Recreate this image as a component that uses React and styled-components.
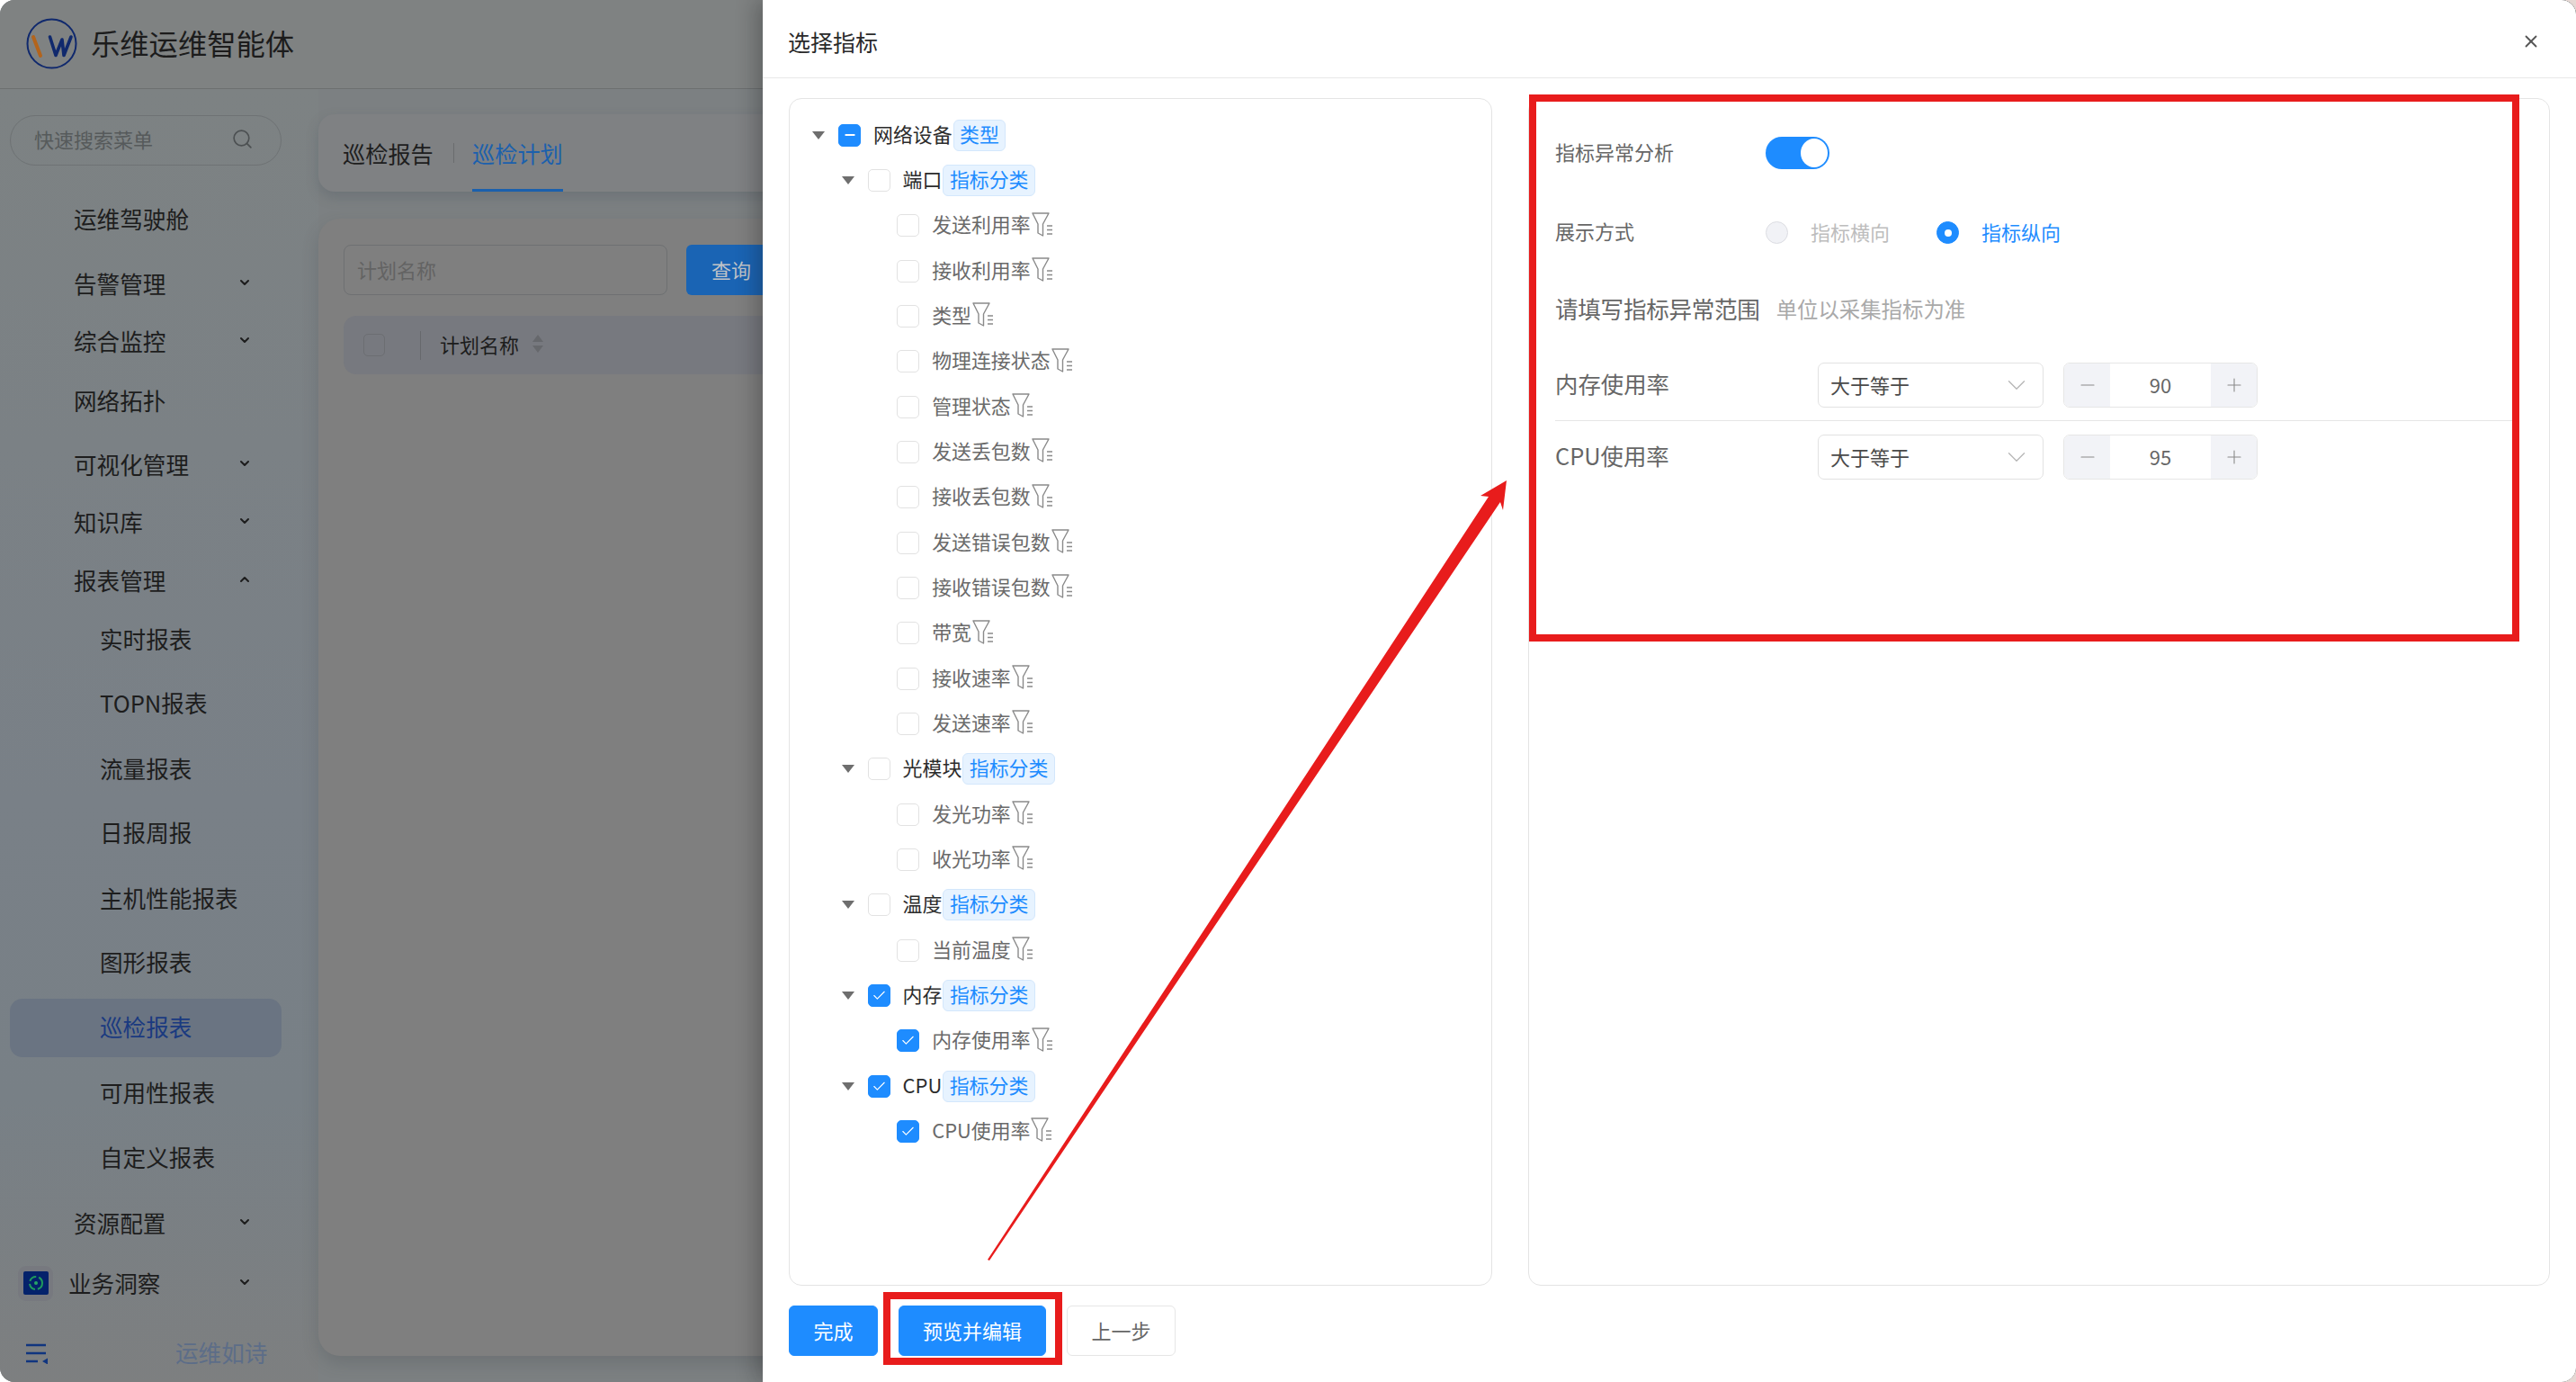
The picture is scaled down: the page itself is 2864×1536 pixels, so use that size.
import React from "react";
import styled, { createGlobalStyle } from "styled-components";
import { Search, X, ChevronDown, ChevronUp, Check, Minus, Plus } from "lucide-react";

const GlobalStyle = createGlobalStyle`
  html, body {
    margin: 0;
    padding: 0;
    background: linear-gradient(90deg, #fff 50%, #e6d8d4 50%);
  }
  * {
    box-sizing: border-box;
  }
  body {
    font-family: "Noto Sans CJK SC", "Noto Sans", sans-serif;
  }
`;

const Shell = styled.div`
  position: relative;
  width: 2864px;
  height: 1536px;
  border-radius: 16px;
  overflow: hidden;
  background: #7c8082;
  display: flex;
  flex-direction: column;
`;

const TopBar = styled.header`
  height: 99px;
  flex: none;
  display: flex;
  align-items: center;
  gap: 15px;
  padding: 0 0 2px 29px;
  background: #7f8282;
  border-bottom: 1px solid #6c6f70;
`;

const AppName = styled.div`
  font-size: 32.3px;
  margin-bottom: 2px;
  color: #1c1c1c;
  white-space: nowrap;
`;

const Body = styled.div`
  flex: 1;
  min-height: 0;
  display: flex;
`;

const Sidebar = styled.aside`
  width: 354px;
  flex: none;
  padding: 29px 41px 0 11px;
  display: flex;
  flex-direction: column;
  background: linear-gradient(180deg, #7d8283 0%, #798087 55%, #788086 78%, #7d7f80 100%);
`;

const SearchBox = styled.div`
  height: 56px;
  flex: none;
  border-radius: 28px;
  border: 1px solid #6e7274;
  padding: 0 30px 4px 26px;
  display: flex;
  align-items: center;
  justify-content: space-between;
  font-size: 22px;
  color: #565a5b;
  svg {
    color: #4c5052;
  }
`;

const Nav = styled.nav`
  padding-top: 28px;
  display: flex;
  flex-direction: column;
`;

const NavItem = styled.div`
  height: ${(p) => (p.$active ? 65 : 64)}px;
  margin-top: ${(p) => p.$gap}px;
  flex: none;
  display: flex;
  align-items: center;
  padding: 0 33px 0 ${(p) => (p.$tile ? 9 : p.$sub ? 100 : 71)}px;
  font-size: 25.6px;
  color: ${(p) => (p.$active ? "#1a3a80" : "#1d1d1d")};
  background: ${(p) => (p.$active ? "#6a7482" : "transparent")};
  border-radius: 14px;
  white-space: nowrap;
`;

const NavLabel = styled.span`
  flex: 1;
  margin-bottom: 4px;
`;

const NavArrow = styled.span`
  display: flex;
  margin-top: -5px;
  color: #1d1d1d;
`;

const IconTile = styled.span`
  width: 39px;
  height: 39px;
  flex: none;
  margin-right: 17px;
  margin-top: -2px;
  border-radius: 9px;
  background: #77797f;
  display: flex;
  align-items: center;
  justify-content: center;
`;

const SideFoot = styled.div`
  margin-top: auto;
  height: 44px;
  margin-bottom: 10px;
  padding-left: 18px;
  display: flex;
  align-items: center;
`;

const FootText = styled.span`
  margin-left: 141px;
  margin-bottom: 4px;
  font-size: 25.6px;
  color: #5c6d88;
  white-space: nowrap;
`;

const Main = styled.main`
  flex: 1;
  min-width: 0;
  padding: 28px 0 29px;
  display: flex;
  flex-direction: column;
  gap: 30px;
`;

const TabCard = styled.div`
  height: 86px;
  flex: none;
  padding: 0 0 0 27px;
  display: flex;
  align-items: center;
  background: #7f8183;
  border-radius: 18px 0 0 18px;
  box-shadow: 0 6px 14px rgba(70, 80, 90, 0.28);
`;

const Tab = styled.div`
  position: relative;
  height: 100%;
  display: flex;
  align-items: center;
  width: 101px;
  font-size: 25.2px;
  color: ${(p) => (p.$active ? "#1b60ad" : "#1d1d1d")};
  &::after {
    content: "";
    display: ${(p) => (p.$active ? "block" : "none")};
    position: absolute;
    left: 0;
    right: 0;
    bottom: 0;
    height: 3px;
    background: #1b60ad;
  }
`;

const TabSep = styled.span`
  width: 1px;
  height: 22px;
  margin: 0 20px 0 22px;
  background: #6a6c6e;
`;

const ContentCard = styled.div`
  flex: 1;
  padding: 29px 0 0 28px;
  background: #7f7f7f;
  border-radius: 24px 0 0 24px;
  box-shadow: 0 8px 18px rgba(60, 65, 70, 0.22);
`;

const FilterRow = styled.div`
  display: flex;
  gap: 21px;
`;

const FilterInput = styled.div`
  width: 360px;
  height: 56px;
  padding: 0 14px 2px;
  display: flex;
  align-items: center;
  border: 1px solid #6e7072;
  border-radius: 8px;
  font-size: 22px;
  color: #636363;
`;

const QueryButton = styled.div`
  flex: 1;
  height: 56px;
  padding: 0 0 3px 28px;
  display: flex;
  align-items: center;
  background: #1a64b4;
  border-radius: 6px 0 0 6px;
  font-size: 22px;
  color: #c0c3c8;
`;

const TableHead = styled.div`
  height: 65px;
  margin-top: 23px;
  padding-left: 22px;
  display: flex;
  align-items: center;
  background: #77797f;
  border-radius: 14px 0 0 14px;
  font-size: 22px;
  color: #1c1c1c;
`;

const HeadTitle = styled.span`
  margin-bottom: 4px;
`;

const HeadCheck = styled.span`
  width: 24px;
  height: 25px;
  border: 1px solid #6c6e72;
  border-radius: 5px;
`;

const HeadSep = styled.span`
  width: 1px;
  height: 32px;
  margin: 0 21px 0 39px;
  background: #66686c;
`;

const SortMark = styled.svg`
  width: 12px;
  height: 20px;
  margin: 0 0 4px 15px;
`;

const Drawer = styled.section`
  position: absolute;
  top: 0;
  bottom: 0;
  left: 848px;
  right: 0;
  display: flex;
  flex-direction: column;
  background: #fff;
  border-radius: 0 16px 16px 0;
  box-shadow: -8px 0 22px rgba(20, 20, 20, 0.28);
`;

const DrawerHead = styled.div`
  height: 87px;
  flex: none;
  padding: 5px 39px 0 28px;
  display: flex;
  align-items: center;
  justify-content: space-between;
  border-bottom: 1px solid #e8e8e8;
  font-size: 25px;
  color: #2a2a2a;
  svg {
    color: #555;
  }
`;

const DrawerBody = styled.div`
  flex: 1;
  min-height: 0;
  padding: 22px 29px 0;
  display: flex;
  gap: 40px;
`;

const Panel = styled.div`
  position: relative;
  width: ${(p) => p.$width}px;
  flex: none;
  border: 1px solid #e4e4e4;
  border-radius: 14px;
`;

const TreePanel = styled(Panel)`
  padding-top: 15px;
`;

const TreeRow = styled.div`
  height: 50.34px;
  padding-left: ${(p) => 25 + p.$level * 32.6}px;
  display: flex;
  align-items: center;
  font-size: 21.9px;
  white-space: nowrap;
  color: ${(p) => (p.$level === 2 ? "#6a6a6a" : "#2c2c2c")};
`;

const Caret = styled.span`
  width: 29px;
  flex: none;
  display: flex;
  &::before {
    content: "";
    display: ${(p) => (p.$show ? "block" : "none")};
    width: 0;
    height: 0;
    border-left: 7.5px solid transparent;
    border-right: 7.5px solid transparent;
    border-top: 9px solid #6e6e6e;
  }
`;

const TreeCheck = styled.span`
  width: 25px;
  height: 25px;
  flex: none;
  margin-right: 14px;
  display: flex;
  align-items: center;
  justify-content: center;
  color: #fff;
  border-radius: 5px;
  border: 1px solid ${(p) => (p.$state === "none" ? "#e2e2e2" : "#1e8cff")};
  background: ${(p) => (p.$state === "none" ? "#fff" : "#1e8cff")};
`;

const TreeLabel = styled.span`
  margin-bottom: 4px;
`;

const TagChip = styled.span`
  height: 35px;
  margin-left: 1px;
  padding: 0 6.5px 4px;
  display: flex;
  align-items: center;
  background: #e7f3ff;
  border: 1px solid #d3e7fc;
  border-radius: 6px;
  color: #1e8cff;
`;

const FunnelMark = styled.svg`
  width: 24px;
  height: 27px;
  flex: none;
  margin: -3px 0 0 1px;
`;

const FormPanel = styled(Panel)`
  padding: 42px 39px 0 29px;
`;

const OptionRow = styled.div`
  height: ${(p) => p.$height}px;
  margin-top: ${(p) => p.$gap || 0}px;
  display: flex;
  align-items: center;
  font-size: 22px;
  color: #666;
`;

const OptionLabel = styled.span`
  width: 234px;
  flex: none;
  margin-bottom: 5px;
`;

const Toggle = styled.span`
  width: 71px;
  height: 36px;
  padding: 2px;
  display: flex;
  justify-content: flex-end;
  background: #1e8cff;
  border-radius: 18px;
  &::after {
    content: "";
    width: 30px;
    height: 32px;
    border-radius: 50%;
    background: #fff;
  }
`;

const RadioDot = styled.span`
  width: 25px;
  height: 25px;
  flex: none;
  margin-right: 25px;
  display: flex;
  align-items: center;
  justify-content: center;
  border-radius: 50%;
  border: 1px solid ${(p) => (p.$on ? "#1e8cff" : "#dcdde2")};
  background: ${(p) => (p.$on ? "#1e8cff" : "#f1f2f6")};
  &::after {
    content: "";
    display: ${(p) => (p.$on ? "block" : "none")};
    width: 8px;
    height: 8px;
    border-radius: 50%;
    background: #fff;
  }
`;

const RadioText = styled.span`
  margin: 0 ${(p) => (p.$on ? 0 : 52)}px 3px 0;
  color: ${(p) => (p.$on ? "#1e8cff" : "#bdbdbd")};
`;

const RangeTitle = styled.span`
  font-size: 25.6px;
  color: #666;
  letter-spacing: -0.3px;
  margin-bottom: 2px;
`;

const RangeHint = styled.span`
  margin-left: 18px;
  font-size: 23.4px;
  color: #a9a9a9;
`;

const RangeList = styled.div`
  margin-top: 45px;
`;

const RangeRow = styled.div`
  padding-bottom: 14px;
  margin-bottom: 15px;
  display: flex;
  align-items: center;
  border-bottom: 1px solid ${(p) => (p.$last ? "transparent" : "#e6e6e6")};
`;

const RangeName = styled.span`
  width: 292px;
  flex: none;
  margin-bottom: 4px;
  font-size: 25.4px;
  color: #666;
`;

const SelectBox = styled.div`
  width: 251px;
  height: 50px;
  flex: none;
  padding: 0 12px 0 13px;
  display: flex;
  align-items: center;
  justify-content: space-between;
  border: 1px solid #e2e2e2;
  border-radius: 7px;
  font-size: 22px;
  color: #4a4a4a;
  svg {
    color: #b5b5b5;
  }
`;

const SelectText = styled.span`
  margin-bottom: 3px;
`;

const Stepper = styled.div`
  width: 216px;
  height: 50px;
  margin-left: 22px;
  flex: none;
  display: flex;
  align-items: stretch;
  border: 1px solid #e6e6e6;
  border-radius: 7px;
  overflow: hidden;
  font-size: 22px;
  color: #666;
`;

const StepButton = styled.span`
  width: 51px;
  flex: none;
  display: flex;
  align-items: center;
  justify-content: center;
  background: #f2f3f7;
  color: #8a8a8a;
`;

const StepValue = styled.span`
  flex: 1;
  padding-bottom: 3px;
  display: flex;
  align-items: center;
  justify-content: center;
`;

const DrawerFoot = styled.div`
  height: 107px;
  flex: none;
  padding: 22px 29px 0;
  display: flex;
  gap: 23px;
`;

const ActionButton = styled.div`
  position: relative;
  width: ${(p) => p.$width}px;
  height: 56px;
  padding-bottom: 3px;
  display: flex;
  align-items: center;
  justify-content: center;
  font-size: 22px;
  border-radius: 6px;
  color: ${(p) => (p.$primary ? "#fff" : "#666")};
  background: ${(p) => (p.$primary ? "#1e8cff" : "#fff")};
  border: 1px solid ${(p) => (p.$primary ? "#1e8cff" : "#e6e6e6")};
`;

const ButtonFrame = styled.span`
  position: absolute;
  top: -16px;
  bottom: -11px;
  left: -18px;
  right: -19px;
  border: 8px solid #e81c1c;
  pointer-events: none;
`;

const PanelFrame = styled.span`
  position: absolute;
  top: -5px;
  left: 0;
  width: 1101px;
  height: 608px;
  border: 8px solid #e81c1c;
  pointer-events: none;
`;

const ArrowLayer = styled.svg`
  position: absolute;
  top: 0;
  left: 0;
  width: 2864px;
  height: 1536px;
  pointer-events: none;
`;

const treeRows = [
  { level: 0, label: "网络设备", tag: "类型", state: "partial" },
  { level: 1, label: "端口", tag: "指标分类" },
  { level: 2, label: "发送利用率" },
  { level: 2, label: "接收利用率" },
  { level: 2, label: "类型" },
  { level: 2, label: "物理连接状态" },
  { level: 2, label: "管理状态" },
  { level: 2, label: "发送丢包数" },
  { level: 2, label: "接收丢包数" },
  { level: 2, label: "发送错误包数" },
  { level: 2, label: "接收错误包数" },
  { level: 2, label: "带宽" },
  { level: 2, label: "接收速率" },
  { level: 2, label: "发送速率" },
  { level: 1, label: "光模块", tag: "指标分类" },
  { level: 2, label: "发光功率" },
  { level: 2, label: "收光功率" },
  { level: 1, label: "温度", tag: "指标分类" },
  { level: 2, label: "当前温度" },
  { level: 1, label: "内存", tag: "指标分类", state: "checked" },
  { level: 2, label: "内存使用率", state: "checked" },
  { level: 1, label: "CPU", tag: "指标分类", state: "checked" },
  { level: 2, label: "CPU使用率", state: "checked" },
];

const menu = [
  { label: "运维驾驶舱", gap: 0 },
  { label: "告警管理", gap: 8, arrow: "down" },
  { label: "综合监控", gap: 0, arrow: "down" },
  { label: "网络拓扑", gap: 2 },
  { label: "可视化管理", gap: 7, arrow: "down" },
  { label: "知识库", gap: 0, arrow: "down" },
  { label: "报表管理", gap: 1, arrow: "up" },
  { label: "实时报表", gap: 1, sub: true },
  { label: "TOPN报表", gap: 7, sub: true },
  { label: "流量报表", gap: 9, sub: true },
  { label: "日报周报", gap: 7, sub: true },
  { label: "主机性能报表", gap: 9, sub: true },
  { label: "图形报表", gap: 7, sub: true },
  { label: "巡检报表", gap: 8, sub: true, active: true },
  { label: "可用性报表", gap: 8, sub: true },
  { label: "自定义报表", gap: 8, sub: true },
  { label: "资源配置", gap: 9, arrow: "down" },
  { label: "业务洞察", gap: 3, arrow: "down", tile: true },
];

const ranges = [
  { name: "内存使用率", value: 90 },
  { name: "CPU使用率", value: 95, last: true },
];

function LogoMark() {
  return (
    <svg width="57" height="57" viewBox="0 0 57 57" fill="none">
      <circle cx="28.5" cy="28.5" r="27" stroke="#10296d" strokeWidth="2" />
      <path d="M8 21 L16 42" stroke="#b3641c" strokeWidth="4" strokeLinecap="round" />
      <path
        d="M26.5 21 L33 41.5 L40 24 L42 41.5 L50 21"
        stroke="#10296d"
        strokeWidth="3.6"
        strokeLinecap="round"
        strokeLinejoin="round"
      />
    </svg>
  );
}

function InsightIcon() {
  return (
    <svg width="28" height="26" viewBox="0 0 28 26" fill="none">
      <rect width="28" height="26" rx="2" fill="#04226b" />
      <circle cx="14" cy="13" r="7" stroke="#1f9a5c" strokeWidth="2" strokeDasharray="9 3" />
      <circle cx="14" cy="13" r="2" fill="#26a566" />
    </svg>
  );
}

function CollapseIcon() {
  return (
    <svg width="25" height="23" viewBox="0 0 25 23" fill="none">
      <path d="M0 2 H22 M0 11 H22 M0 20 H13" stroke="#10357f" strokeWidth="2.6" />
      <path d="M18 20 L24 16.5 V23.5 Z" fill="#10357f" />
    </svg>
  );
}

function SortIcon() {
  return (
    <SortMark viewBox="0 0 12 20">
      <path d="M6 0 L12 8 H0 Z" fill="#66686c" />
      <path d="M6 20 L12 12 H0 Z" fill="#66686c" />
    </SortMark>
  );
}

function Funnel() {
  return (
    <FunnelMark viewBox="0 0 24 27" fill="none" stroke="#8a8a8a" strokeWidth="1.4">
      <path d="M1 1 H19 L12.5 13 V26 L7 23 V13 Z" strokeLinejoin="round" />
      <path d="M17 15 H23 M17 19.5 H23 M17 24 H23" />
    </FunnelMark>
  );
}

export default function App() {
  return (
    <>
      <GlobalStyle />
      <Shell>
        <TopBar>
          <LogoMark />
          <AppName>乐维运维智能体</AppName>
        </TopBar>
        <Body>
          <Sidebar>
            <SearchBox>
              快速搜索菜单
              <Search size={25} strokeWidth={1.6} />
            </SearchBox>
            <Nav>
              {menu.map((m) => (
                <NavItem key={m.label} $gap={m.gap} $sub={m.sub} $active={m.active} $tile={m.tile}>
                  {m.tile && (
                    <IconTile>
                      <InsightIcon />
                    </IconTile>
                  )}
                  <NavLabel>{m.label}</NavLabel>
                  {m.arrow && (
                    <NavArrow>
                      {m.arrow === "up" ? (
                        <ChevronUp size={16} strokeWidth={3} />
                      ) : (
                        <ChevronDown size={16} strokeWidth={3} />
                      )}
                    </NavArrow>
                  )}
                </NavItem>
              ))}
            </Nav>
            <SideFoot>
              <CollapseIcon />
              <FootText>运维如诗</FootText>
            </SideFoot>
          </Sidebar>
          <Main>
            <TabCard>
              <Tab>巡检报告</Tab>
              <TabSep />
              <Tab $active>巡检计划</Tab>
            </TabCard>
            <ContentCard>
              <FilterRow>
                <FilterInput>计划名称</FilterInput>
                <QueryButton>查询</QueryButton>
              </FilterRow>
              <TableHead>
                <HeadCheck />
                <HeadSep />
                <HeadTitle>计划名称</HeadTitle>
                <SortIcon />
              </TableHead>
            </ContentCard>
          </Main>
        </Body>

        <Drawer>
          <DrawerHead>
            选择指标
            <X size={22} strokeWidth={2} />
          </DrawerHead>
          <DrawerBody>
            <TreePanel $width={782}>
              {treeRows.map((r, i) => {
                const state = r.state || "none";
                return (
                  <TreeRow key={i} $level={r.level}>
                    <Caret $show={r.level < 2} />
                    <TreeCheck $state={state}>
                      {state === "partial" && <Minus size={16} strokeWidth={3} />}
                      {state === "checked" && <Check size={17} strokeWidth={1.6} />}
                    </TreeCheck>
                    <TreeLabel>{r.label}</TreeLabel>
                    {r.tag && <TagChip>{r.tag}</TagChip>}
                    {r.level === 2 && <Funnel />}
                  </TreeRow>
                );
              })}
            </TreePanel>
            <FormPanel $width={1136}>
              <PanelFrame />
              <OptionRow $height={36}>
                <OptionLabel>指标异常分析</OptionLabel>
                <Toggle />
              </OptionRow>
              <OptionRow $height={25} $gap={58}>
                <OptionLabel>展示方式</OptionLabel>
                <RadioDot />
                <RadioText>指标横向</RadioText>
                <RadioDot $on />
                <RadioText $on>指标纵向</RadioText>
              </OptionRow>
              <OptionRow $height={30} $gap={57}>
                <RangeTitle>请填写指标异常范围</RangeTitle>
                <RangeHint>单位以采集指标为准</RangeHint>
              </OptionRow>
              <RangeList>
                {ranges.map((r) => (
                  <RangeRow key={r.name} $last={r.last}>
                    <RangeName>{r.name}</RangeName>
                    <SelectBox>
                      <SelectText>大于等于</SelectText>
                      <ChevronDown size={34} strokeWidth={0.9} />
                    </SelectBox>
                    <Stepper>
                      <StepButton>
                        <Minus size={24} strokeWidth={1.1} />
                      </StepButton>
                      <StepValue>{r.value}</StepValue>
                      <StepButton>
                        <Plus size={24} strokeWidth={1.1} />
                      </StepButton>
                    </Stepper>
                  </RangeRow>
                ))}
              </RangeList>
            </FormPanel>
          </DrawerBody>
          <DrawerFoot>
            <ActionButton $primary $width={99}>
              完成
            </ActionButton>
            <ActionButton $primary $width={164}>
              预览并编辑
              <ButtonFrame />
            </ActionButton>
            <ActionButton $width={121}>上一步</ActionButton>
          </DrawerFoot>
        </Drawer>

        <ArrowLayer viewBox="0 0 2864 1536">
          <path
            d="M1098 1400 L1655 552 L1646 551 L1675 534 L1671 567 L1668 558 L1100 1401 Z"
            fill="#e81c1c"
          />
        </ArrowLayer>
      </Shell>
    </>
  );
}
